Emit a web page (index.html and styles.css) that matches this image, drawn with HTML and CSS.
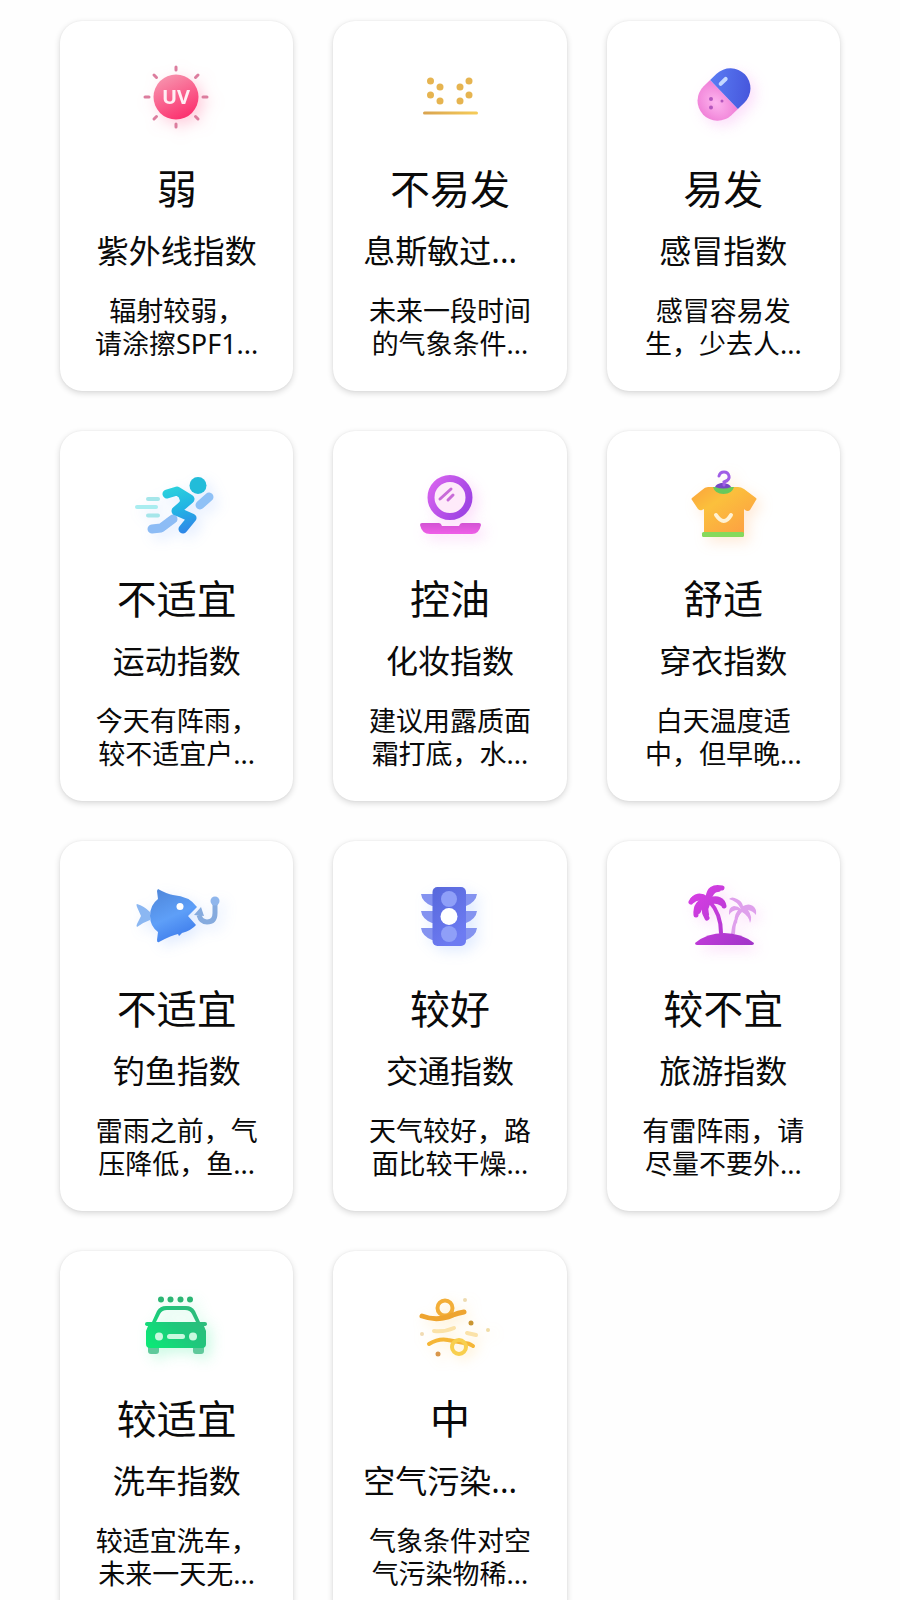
FILE: index.html
```html
<!DOCTYPE html>
<html lang="zh-CN">
<head>
  <meta charset="UTF-8">
  <meta name="viewport" content="width=device-width, initial-scale=1.0">
  <title>生活指数</title>
  <link rel="stylesheet" href="styles.css">
</head>
<body>
  <main class="index-grid">

    <article class="card">
      <svg class="icon glow-pink" viewBox="2 0 110 90" aria-hidden="true">
        <defs>
          <linearGradient id="uv" x1="0.2" y1="0" x2="0.7" y2="1">
            <stop offset="0" stop-color="#f797b0"/>
            <stop offset="1" stop-color="#fc2e6d"/>
          </linearGradient>
        </defs>
        <g stroke="#dc7d9e" stroke-width="3" stroke-linecap="round">
          <path d="M56 17v3M56 74v3M25 47h4M83 47h4M34 25l2.500 2.500M78 25l-2.500 2.500M34 69l2.500-2.500M78 69l-2.500-2.500"/>
        </g>
        <circle cx="56" cy="47" r="22.500" fill="url(#uv)"/>
        <text class="uv-text" x="56" y="54" text-anchor="middle">UV</text>
      </svg>
      <h2>弱</h2>
      <h3>紫外线指数</h3>
      <p>辐射较弱，<br>请涂擦SPF1...</p>
    </article>

    <article class="card">
      <svg class="icon" viewBox="-5 0 110 90" aria-hidden="true">
        <defs>
          <linearGradient id="sand" x1="0" x2="1">
            <stop offset="0" stop-color="#d9a34f"/>
            <stop offset="1" stop-color="#f6cc58"/>
          </linearGradient>
        </defs>
        <g fill="#e6b450">
          <circle cx="30.500" cy="31" r="3.500"/>
          <circle cx="40" cy="37" r="3.500"/>
          <circle cx="30.500" cy="45" r="3.500"/>
          <circle cx="40" cy="51" r="3.500"/>
          <circle cx="69" cy="31" r="3.500"/>
          <circle cx="60" cy="37" r="3.500"/>
          <circle cx="69" cy="45" r="3.500"/>
          <circle cx="60" cy="51" r="3.500"/>
        </g>
        <rect x="23" y="61.500" width="55" height="3" rx="1.500" fill="url(#sand)"/>
      </svg>
      <h2>不易发</h2>
      <h3 class="elided">息斯敏过...</h3>
      <p>未来一段时间<br>的气象条件...</p>
    </article>

    <article class="card">
      <svg class="icon glow-rose" viewBox="-2 0 110 90" aria-hidden="true">
        <defs>
          <linearGradient id="pillBlue" x1="0" y1="0" x2="0.6" y2="1">
            <stop offset="0" stop-color="#5a7cf3"/>
            <stop offset="1" stop-color="#4656dc"/>
          </linearGradient>
          <radialGradient id="pillPink" cx="0.600" cy="0.500" r="0.700">
            <stop offset="0" stop-color="#fdb4ee"/>
            <stop offset="1" stop-color="#ee79d4"/>
          </radialGradient>
        </defs>
        <g transform="translate(54 44.500) rotate(-44)">
          <path d="M0-20h-9a20 20 0 0 0 0 40H0z" fill="url(#pillPink)"/>
          <path d="M0-20h9a20 20 0 0 1 0 40H0z" fill="url(#pillBlue)"/>
          <path d="M5-10h7" stroke="#c4d8ff" stroke-width="4" stroke-linecap="round"/>
        </g>
        <g fill="#b356bd">
          <circle cx="41" cy="49" r="2"/>
          <circle cx="41" cy="57.500" r="2"/>
          <circle cx="52" cy="51" r="1.500"/>
        </g>
      </svg>
      <h2>易发</h2>
      <h3>感冒指数</h3>
      <p>感冒容易发<br>生，少去人...</p>
    </article>

    <article class="card">
      <svg class="icon glow-blue" viewBox="2 0 110 90" aria-hidden="true">
        <defs>
          <linearGradient id="run" x1="50" y1="26" x2="66" y2="74" gradientUnits="userSpaceOnUse">
            <stop offset="0" stop-color="#2cd3dc"/>
            <stop offset="0.500" stop-color="#22b3e4"/>
            <stop offset="1" stop-color="#2f83e8"/>
          </linearGradient>
        </defs>
        <g fill="none" stroke-linecap="round" stroke-linejoin="round">
          <path d="M28 39h10M28 55.500h10" stroke="#a5e6ea" stroke-width="4"/>
          <path d="M17 47h19" stroke="#a9edf0" stroke-width="4"/>
          <path d="M32 69l9-1 12-9" stroke="#8dbcf5" stroke-width="9"/>
          <path d="M80 45l9-8" stroke="#8fc1f6" stroke-width="9"/>
          <path d="M47 34l10-3 13 8-14 12 16 7-9 11" stroke="url(#run)" stroke-width="9"/>
        </g>
        <path d="M56 29l14 6 4 6-15 12-5-3 6-9z" fill="url(#run)"/>
        <circle cx="78" cy="25.500" r="8.500" fill="#22bcd9"/>
      </svg>
      <h2>不适宜</h2>
      <h3>运动指数</h3>
      <p>今天有阵雨，<br>较不适宜户...</p>
    </article>

    <article class="card">
      <svg class="icon glow-rose" viewBox="-5 0 110 90" aria-hidden="true">
        <defs>
          <linearGradient id="ring" x1="0" y1="0" x2="1" y2="0.600">
            <stop offset="0" stop-color="#d964ef"/>
            <stop offset="1" stop-color="#a044e4"/>
          </linearGradient>
          <linearGradient id="tray" x1="0" y1="0" x2="0" y2="1">
            <stop offset="0" stop-color="#d253d3"/>
            <stop offset="1" stop-color="#f05fe8"/>
          </linearGradient>
        </defs>
        <circle cx="50" cy="37.500" r="19" fill="#feeafa" stroke="url(#ring)" stroke-width="7"/>
        <path d="M40 39l11-10M48 40l5-5" stroke="#c86bd8" stroke-width="3" stroke-linecap="round"/>
        <path d="M22 63h17q2 0 3 3h17q1-3 3-3h17q2 0 2 2-2 9-9 9H30q-8 0-10-9 0-2 2-2z" fill="url(#tray)"/>
      </svg>
      <h2>控油</h2>
      <h3>化妆指数</h3>
      <p>建议用露质面<br>霜打底，水...</p>
    </article>

    <article class="card">
      <svg class="icon glow-orange" viewBox="-2 0 110 90" aria-hidden="true">
        <defs>
          <linearGradient id="shirt" x1="0" y1="0" x2="1" y2="1">
            <stop offset="0" stop-color="#fba33c"/>
            <stop offset="0.350" stop-color="#fbc03c"/>
            <stop offset="1" stop-color="#fd9b44"/>
          </linearGradient>
        </defs>
        <path d="M38 27h30q3 0 6 2l12 9q1 1 0 2l-6 10q-2 2-5 0l-1-1v24H34V49l-2 1q-2 1-4-1l-6-9q-1-1 0-2l10-8q3-3 6-3z" fill="url(#shirt)"/>
        <path d="M43 27h21q-2 7-10.500 7T43 27z" fill="#68c95c"/>
        <path d="M45 27q1-3 6-4h3q6 1 7 4-7 3-16 0z" fill="#7547c4"/>
        <path d="M49 16q1-4 5-4t5 4-5 6v3" fill="none" stroke="#a05ee6" stroke-width="3" stroke-linecap="round"/>
        <path d="M46 55q8 12 15 0" fill="none" stroke="#fff2d4" stroke-width="4" stroke-linecap="round"/>
        <rect x="32" y="72" width="42" height="5" rx="1.500" fill="#86d95c"/>
      </svg>
      <h2>舒适</h2>
      <h3>穿衣指数</h3>
      <p>白天温度适<br>中，但早晚...</p>
    </article>

    <article class="card">
      <svg class="icon glow-blue" viewBox="2 0 110 90" aria-hidden="true">
        <defs>
          <linearGradient id="fish" x1="0.300" y1="0" x2="0.700" y2="1">
            <stop offset="0" stop-color="#5089dd"/>
            <stop offset="0.500" stop-color="#5e9ff8"/>
            <stop offset="1" stop-color="#3a78ea"/>
          </linearGradient>
        </defs>
        <path d="M17 34q7 2 13 8v8q-6 2-13 7-1-1 0-3l4-8-4-9q-1-3 0-3z" fill="#8bb7f2"/>
        <path d="M38 19q9 5 15 6 16 1 24 12L68 46l8 9q-4 5-14 8l-3 3-1-2q-6 1-19 8-2 1-2-2l1-8q-8-6-8-16 0-11 8-17l-1-8q0-2 2-2z" fill="url(#fish)"/>
        <circle cx="60" cy="36.500" r="3.500" fill="#fff"/>
        <path d="M95 31v12q0 9-8 9-6 0-8-7" fill="none" stroke="#86abde" stroke-width="5"/>
        <path d="M74 45l7-8 3 9z" fill="#86abde"/>
        <circle cx="95" cy="31" r="4.500" fill="#8fb6ec"/>
      </svg>
      <h2>不适宜</h2>
      <h3>钓鱼指数</h3>
      <p>雷雨之前，气<br>压降低，鱼...</p>
    </article>

    <article class="card">
      <svg class="icon glow-blue" viewBox="-5 0 110 90" aria-hidden="true">
        <defs>
          <linearGradient id="lamp" x1="0" y1="0" x2="0.500" y2="1">
            <stop offset="0" stop-color="#5768db"/>
            <stop offset="1" stop-color="#6d7bf2"/>
          </linearGradient>
        </defs>
        <g fill="#8493f0">
          <path d="M21 24h56q-1 8-11 12H32q-10-4-11-12z"/>
          <path d="M21 41h56q-1 8-11 12H32q-10-4-11-12z"/>
          <path d="M21 58h56q-1 8-11 12H32q-10-4-11-12z"/>
        </g>
        <rect x="32.500" y="17" width="33.500" height="59" rx="5" fill="url(#lamp)"/>
        <circle cx="49" cy="29" r="8" fill="#8f9ff8"/>
        <circle cx="49" cy="46.500" r="8.500" fill="#fff"/>
        <circle cx="49" cy="64" r="8" fill="#8f9ff8"/>
      </svg>
      <h2>较好</h2>
      <h3>交通指数</h3>
      <p>天气较好，路<br>面比较干燥...</p>
    </article>

    <article class="card">
      <svg class="icon glow-rose" viewBox="-2 0 110 90" aria-hidden="true">
        <defs>
          <linearGradient id="palm" x1="18" y1="15" x2="80" y2="75" gradientUnits="userSpaceOnUse">
            <stop offset="0" stop-color="#dc3fe6"/>
            <stop offset="1" stop-color="#a235c9"/>
          </linearGradient>
        </defs>
        <g fill="#dfa0ec">
          <path d="M71 39q-4-8-12-10 3-3 8 0 5 2 6 7 6-3 10 0 4 3 3 9-3-4-8-5 5 7 2 13-1-7-8-11-5 4-5 12-5-6 1-14-6 0-9 5-1-8 5-9 4 0 7 3z"/>
          <path d="M70 40q-8 10-9 24h4q0-14 7-23z"/>
        </g>
        <g fill="none" stroke="url(#palm)" stroke-linecap="round">
          <path d="M37 29q-10-7-16 3M37 30q-12 2-11 15M38 30q-7 9-1 18M39 30q13-4 15 6M38 28q1-13 14-10" stroke-width="5"/>
          <path d="M35 29q-8-3-12 1M36 33q-6 2-8 8M37 34q-3 5-1 10M42 31q6-1 10 2M40 25q3-6 8-6" stroke-width="6"/>
          <path d="M40 32q11 12 11 31" stroke-width="4"/>
        </g>
        <path d="M25 73q12-10 29-10t30 10q0 2-2 2H27q-2 0-2-2z" fill="url(#palm)"/>
      </svg>
      <h2>较不宜</h2>
      <h3>旅游指数</h3>
      <p>有雷阵雨，请<br>尽量不要外...</p>
    </article>

    <article class="card">
      <svg class="icon glow-green" viewBox="2 0 110 90" aria-hidden="true">
        <defs>
          <linearGradient id="car" x1="0" y1="0.800" x2="0.800" y2="0.200">
            <stop offset="0" stop-color="#0ce777"/>
            <stop offset="0.600" stop-color="#1fc77c"/>
            <stop offset="1" stop-color="#2bbd7c"/>
          </linearGradient>
        </defs>
        <g fill="#2bb673">
          <circle cx="41" cy="19.500" r="3"/>
          <circle cx="50.500" cy="19.500" r="3"/>
          <circle cx="60.500" cy="19.500" r="3"/>
          <circle cx="70" cy="19.500" r="3"/>
        </g>
        <path d="M28 67h11v4q0 3-3 3h-5q-3 0-3-3zM73 67h11v4q0 3-3 3h-5q-3 0-3-3z" fill="#5fc99b"/>
        <path fill-rule="evenodd" d="M46 26h20q6 0 9 5l5 11h5q2 0 2 2t-3 2l2 5v13q0 4-4 4H30q-4 0-4-4V51l2-5q-3 0-3-2t2-2h5l5-11q3-5 9-5zM47 30q-5 0-7 4l-4 8h40l-4-8q-2-4-7-4z" fill="url(#car)"/>
        <g fill="#c8f9df">
          <circle cx="39" cy="56.500" r="4"/>
          <circle cx="73" cy="56.500" r="4"/>
          <rect x="47" y="54" width="18" height="5" rx="2.500"/>
        </g>
      </svg>
      <h2>较适宜</h2>
      <h3>洗车指数</h3>
      <p>较适宜洗车，<br>未来一天无...</p>
    </article>

    <article class="card">
      <svg class="icon glow-orange-soft" viewBox="-5 0 110 90" aria-hidden="true">
        <g fill="none" stroke-linecap="round">
          <path d="M34 51q11 1 20-3M67 53l9 2" stroke="#fbe2a8" stroke-width="4"/>
          <circle cx="45" cy="28" r="7.500" stroke="#f3ae38" stroke-width="4"/>
          <path d="M22 36q11 4 21 2 6-1 10-3 5-2 11-3" stroke="#eea42f" stroke-width="5"/>
          <path d="M29 64q10-6 19-4l16 3q5 0 9 3" stroke="#f5b636" stroke-width="4"/>
          <circle cx="59" cy="67" r="7" stroke="#f8cf4e" stroke-width="4"/>
        </g>
        <circle cx="71" cy="43" r="2.500" fill="#c99532"/>
        <circle cx="38" cy="74" r="2.500" fill="#d9964a"/>
        <circle cx="65" cy="20" r="2" fill="#eedbb0"/>
        <circle cx="88" cy="50" r="2" fill="#f0dca6"/>
        <circle cx="22" cy="54" r="2" fill="#f1dbb2"/>
      </svg>
      <h2>中</h2>
      <h3 class="elided">空气污染...</h3>
      <p>气象条件对空<br>气污染物稀...</p>
    </article>

  </main>
</body>
</html>
```
FILE: styles.css
```css
* {
  box-sizing: border-box;
  margin: 0;
  padding: 0;
}

body {
  font-family: "Noto Sans", "Noto Sans CJK SC", sans-serif;
  background-color: #fefefe;
  color: #0a0a0a;
}

.index-grid {
  display: grid;
  grid-template-columns: repeat(3, 1fr);
  grid-auto-rows: max-content;
  gap: 40px;
  height: 100vh;
  padding: 21px 60px;
  overflow-y: auto;
  scrollbar-width: none;
}

.card {
  display: flex;
  flex-direction: column;
  padding: 29px 30px 31px;
  background-color: #fff;
  border-radius: 22px;
  box-shadow: 0 2px 6px rgba(0, 0, 0, 0.16), 0 0 2px rgba(0, 0, 0, 0.06);
  text-align: center;
  white-space: nowrap;
}

.icon {
  width: 110px;
  height: 90px;
  align-self: center;
}

.uv-text {
  font-family: "Open Sans", sans-serif;
  font-size: 20px;
  font-weight: 700;
  fill: #ffeef3;
}

.card h2 {
  margin-top: 25px;
  font-size: 40px;
  font-weight: 400;
  line-height: 48px;
}

.card h3 {
  margin-top: 18px;
  font-size: 32px;
  font-weight: 400;
  line-height: 40px;
}

.card h3.elided {
  text-align: left;
}

.card p {
  margin-top: 23px;
  font-size: 27px;
  line-height: 33px;
}

/* soft coloured glow under each icon */
.glow-pink {
  filter: drop-shadow(5px 5px 7px rgba(255, 60, 120, 0.25));
}

.glow-rose {
  filter: drop-shadow(5px 5px 7px rgba(240, 90, 230, 0.2));
}

.glow-blue {
  filter: drop-shadow(5px 5px 7px rgba(60, 130, 255, 0.16));
}

.glow-orange {
  filter: drop-shadow(5px 5px 7px rgba(255, 150, 60, 0.2));
}

.glow-orange-soft {
  filter: drop-shadow(4px 4px 6px rgba(255, 190, 60, 0.25));
}

.glow-green {
  filter: drop-shadow(5px 5px 7px rgba(20, 230, 130, 0.22));
}
```
